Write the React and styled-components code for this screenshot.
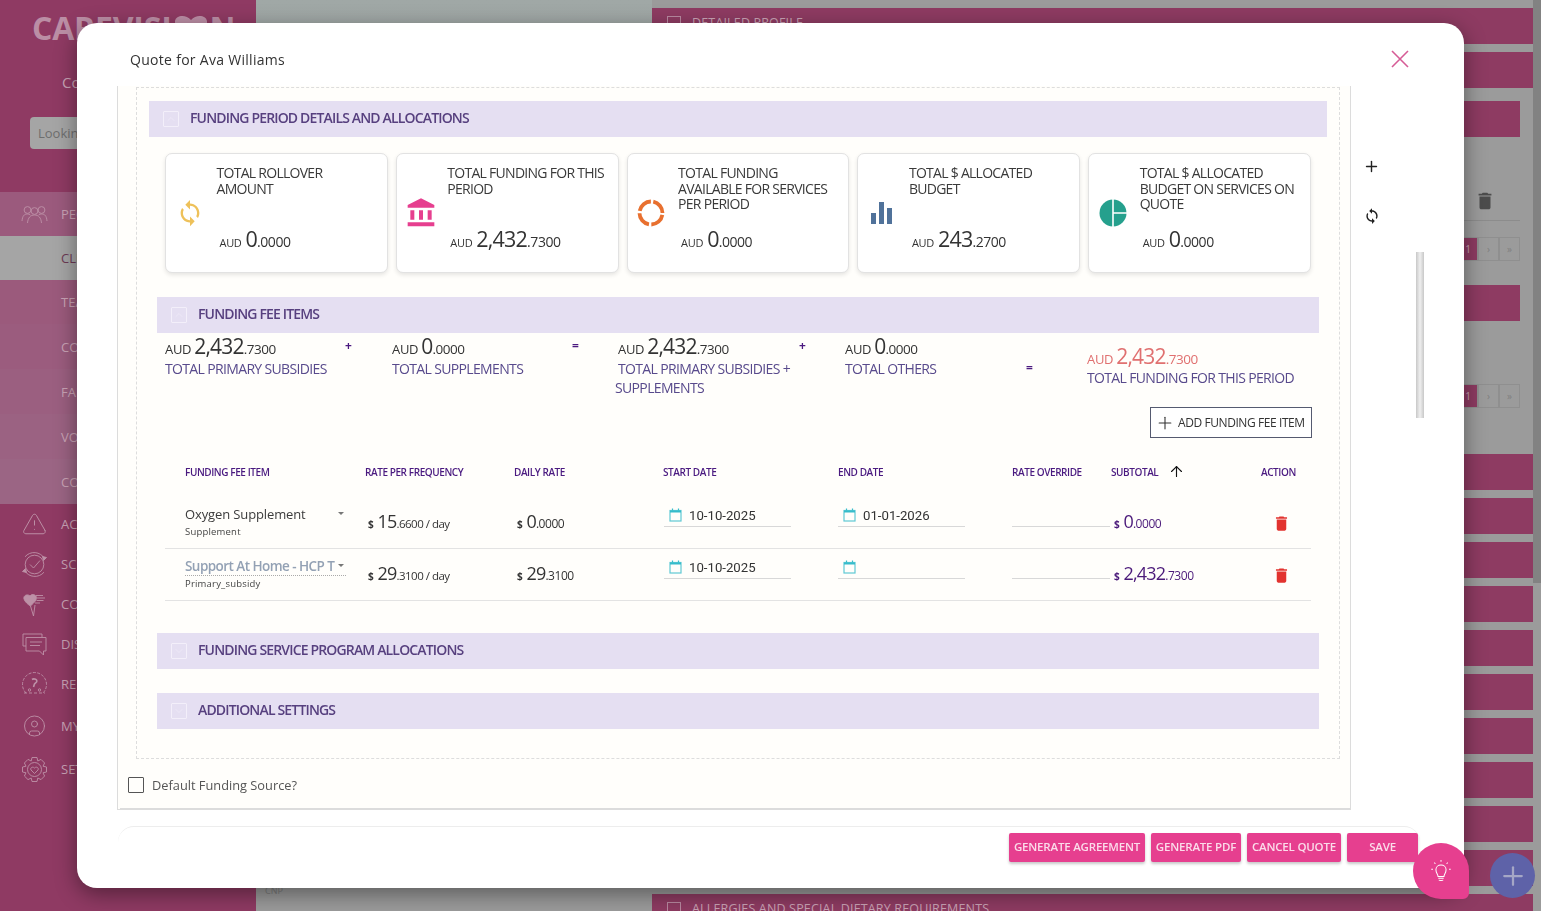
import React from 'react'
import styled, { createGlobalStyle } from 'styled-components'
import { IoMdSync } from 'react-icons/io'
import { MdAccountBalance, MdDelete } from 'react-icons/md'
import { TriangleAlert, CircleUser, Plus, ArrowUp, ChevronUp, ChevronDown } from 'lucide-react'

const GlobalStyle = createGlobalStyle`
    html, body {
        margin: 0;
        height: 100%;
        overflow: hidden;
        font-family: "Open Sans", "Liberation Sans", sans-serif;
        background: #9b9b9b;
    }
    * { box-sizing: border-box; }
`

/* ---------- page behind the dialog ---------- */

const Page = styled.div`
    display: flex;
    height: 911px;
    overflow: hidden;
`

const Sidebar = styled.aside`
    width: 256px;
    flex: none;
    background: #8f3a63;
    color: #c9a3b5;
`

const Logo = styled.div`
    display: flex;
    align-items: center;
    height: 38px;
    margin: 8px 0 0 32px;
    font-size: 32px;
    font-weight: 700;
    letter-spacing: -0.2px;
    color: #bb8ea5;
`

const OrgName = styled.div`
    margin: 26px 0 0 62px;
    font-size: 15px;
    line-height: 20px;
`

const SearchBox = styled.div`
    width: 190px;
    height: 32px;
    margin: 25px 0 0 30px;
    padding-left: 8px;
    background: #a5a5a5;
    border-radius: 4px;
    color: #6e6e6e;
    font-size: 13px;
    line-height: 32px;
`

const NavGroup = styled.div`
    margin-top: ${(p) => p.$top || 0}px;
`

const NavItem = styled.div`
    display: flex;
    align-items: center;
    height: ${(p) => p.$height}px;
    padding-left: ${(p) => p.$indent || 21}px;
    gap: 13px;
    font-size: 13px;
    background: ${(p) => p.$bg || 'transparent'};
    color: ${(p) => p.$color || '#c9a3b5'};

    svg {
        flex: none;
        width: 27px;
        color: #bd91a7;
    }
`

const Middle = styled.div`
    width: 396px;
    flex: none;
    display: flex;
    align-items: flex-end;
    padding: 0 0 14px 9px;
    background: linear-gradient(#a0a8a6, #9b9b9b 30%);
    color: #7a7a7a;
    font-size: 9px;
`

const RightColumn = styled.div`
    width: 881px;
    flex: none;
    padding-top: 8px;
    display: flex;
    flex-direction: column;
`

const Bar = styled.div`
    display: flex;
    align-items: center;
    flex: none;
    height: 36px;
    width: ${(p) => p.$width || 881}px;
    margin-bottom: 8px;
    padding: 0 0 7px 15px;
    gap: 11px;
    background: #8e3b62;
    color: #c9a3b5;
    font-size: 12.5px;
    letter-spacing: 0.16px;
`

const BarBox = styled.span`
    width: 14px;
    height: 14px;
    border: 1px solid #b98aa1;
`

const InnerBlock = styled.div`
    width: 868px;
    height: ${(p) => p.$height}px;
    flex: none;
    display: flex;
    flex-direction: column;
    align-items: flex-end;
    padding-top: ${(p) => p.$top}px;
`

const TrashLine = styled.div`
    width: 100%;
    height: 76px;
    flex: none;
    display: flex;
    justify-content: flex-end;
    align-items: flex-end;
    padding: 0 24px 8px 0;
    border-bottom: 1px solid #8c8c8c;
    color: #4c4c4c;
    font-size: 22px;
`

const Pager = styled.div`
    display: flex;
    height: 24px;
    flex: none;
    margin: ${(p) => p.$margin};
`

const PagerCell = styled.span`
    width: ${(p) => p.$width || 21}px;
    display: flex;
    align-items: center;
    justify-content: center;
    font-size: 10px;
    border: 1px solid #8f8f8f;
    background: ${(p) => (p.$active ? '#8e3b62' : 'transparent')};
    color: ${(p) => (p.$active ? '#c9a3b5' : '#7f7f7f')};
`

const PageScroll = styled.div`
    flex: 1;
    background: linear-gradient(#828282 0, #828282 583px, #9b9b9b 583px);
`

/* ---------- dialog ---------- */

const Overlay = styled.div`
    position: fixed;
    inset: 0;
    padding: 23px 0 0 77px;
`

const Modal = styled.div`
    width: 1387px;
    height: 865px;
    background: #fff;
    border-radius: 20px;
    box-shadow: 0 6px 22px rgba(0, 0, 0, 0.42);
    display: flex;
    flex-direction: column;
`

const ModalHeader = styled.header`
    height: 63px;
    flex: none;
    display: flex;
    align-items: center;
    justify-content: space-between;
    padding: 9px 54px 0 53px;
    color: #333;
    font-size: 14px;
    letter-spacing: 0.29px;
`

const ModalBody = styled.div`
    display: flex;
    height: 724px;
    padding-left: 40px;
    flex: none;
`

const Panel = styled.div`
    width: 1234px;
    background: #fffefb;
    border: 1px solid #dcdcdc;
    border-top: 0;
`

const PanelInner = styled.div`
    height: 722px;
    margin-left: 2px;
    border-bottom: 1px solid #dcdcdc;
`

const DashedBox = styled.div`
    width: 1204px;
    height: 672px;
    margin: 1px 0 0 16px;
    padding: 13px 12px 0;
    border: 1px dashed #ddd;
`

const SectionBar = styled.div`
    display: flex;
    align-items: center;
    height: 36px;
    margin: ${(p) => p.$margin || '0'};
    padding: 0 0 3px 14px;
    gap: 11px;
    background: #e5dff2;
    color: #57407f;
    font-size: 14px;
    font-weight: 600;
    letter-spacing: -0.84px;
`

const Toggle = styled.span`
    display: flex;
    align-items: center;
    justify-content: center;
    width: 16px;
    height: 16px;
    margin-top: 3px;
    border: 1px solid #f3effa;
    border-radius: 1px;
    color: #f3effa;
`

const CardRow = styled.div`
    display: grid;
    grid-template-columns: repeat(5, 1fr);
    gap: 8px;
    margin: 16px 16px 0;
`

const Card = styled.div`
    display: flex;
    height: 120px;
    background: #fff;
    border: 1px solid #e2e2e2;
    border-radius: 7px;
    box-shadow: 0 2px 4px rgba(0, 0, 0, 0.1);
`

const CardIcon = styled.div`
    width: 50.5px;
    flex: none;
    display: flex;
    align-items: center;
    justify-content: center;
    padding: 0 3px 0 0;
`

const CardBody = styled.div`
    flex: 1;
    display: flex;
    flex-direction: column;
    padding: 11px 0 21px 0;
`

const CardTitle = styled.div`
    max-width: 162px;
    color: #3a3a3a;
    font-size: 14px;
    line-height: 15.5px;
    letter-spacing: -0.72px;
`

const CardValue = styled.div`
    margin-top: auto;
    padding-left: 3px;
`

const AmountLine = styled.div`
    display: flex;
    align-items: baseline;
    white-space: nowrap;
    padding-left: ${(p) => p.$indent || 0}px;
    color: ${(p) => p.$color || '#333'};
`

const Currency = styled.span`
    font-size: ${(p) => p.$size || 12.5}px;
    margin-right: ${(p) => p.$gap ?? 4}px;
    font-weight: ${(p) => p.$weight || 400};
    letter-spacing: -0.3px;
`

const Whole = styled.span`
    font-size: ${(p) => p.$size || 21.5}px;
    line-height: 22px;
    font-weight: 500;
    letter-spacing: -0.8px;
`

const Decimals = styled.span`
    font-size: ${(p) => p.$size || 14}px;
    letter-spacing: -0.45px;
`

const FeeSection = styled.section`
    margin: 0 8px;
`

const TotalsRow = styled.div`
    display: grid;
    grid-template-columns: 180px 47px 180px 43px 184px 46px 181px 61px 1fr;
    padding: 2px 0 0 8px;
    height: 74px;
`

const Total = styled.div`
    padding-top: ${(p) => p.$top || 0}px;
`

const TotalLabel = styled.div`
    margin-top: ${(p) => (p.$nowrap ? 0 : 1)}px;
    color: #584a8c;
    font-size: 14px;
    line-height: 19px;
    letter-spacing: -0.65px;
    text-indent: ${(p) => p.$indent || 0}px;
    white-space: ${(p) => (p.$nowrap ? 'nowrap' : 'normal')};
`

const Operator = styled.div`
    padding-top: ${(p) => p.$top || 3}px;
    color: #4b1a80;
    font-size: 12px;
    font-weight: 700;
    line-height: 16px;
`

const ButtonRow = styled.div`
    display: flex;
    justify-content: flex-end;
    padding-right: 7px;
`

const AddButton = styled.button`
    display: flex;
    align-items: center;
    gap: 3px;
    width: 162px;
    height: 31px;
    padding: 0 0 0 4px;
    background: #fff;
    border: 1px solid #555a70;
    color: #333;
    font-family: inherit;
    font-size: 12px;
    letter-spacing: -0.42px;
    white-space: nowrap;
`

const FeeTable = styled.div`
    margin: 0 8px;
`

const Columns = styled.div`
    display: grid;
    grid-template-columns: 180px 149px 149px 175px 174px 99px 150px 1fr;
    padding-left: 20px;
`

const HeadRow = styled(Columns)`
    height: 59px;
    padding-top: 8px;
    align-items: center;
    font-size: 10px;
    letter-spacing: -0.42px;
    font-weight: 600;
`

const HeadCell = styled.div`
    display: flex;
    align-items: center;
    gap: 10px;
    color: #4a1a80;
`

const BodyRow = styled(Columns)`
    height: 52px;
    border-bottom: 1px solid #e3e3e3;
`

const ItemCell = styled.div`
    padding-top: 7px;
`

const ItemSelect = styled.div`
    position: relative;
    width: 161px;
    height: 20px;
    font-size: ${(p) => (p.$muted ? 13.5 : 13)}px;
    line-height: 20px;
    overflow: hidden;
    white-space: nowrap;
    color: ${(p) => (p.$muted ? '#93a1b4' : '#3b3b3b')};
    font-weight: ${(p) => (p.$muted ? 600 : 400)};
    letter-spacing: ${(p) => (p.$muted ? '-0.55px' : '-0.12px')};
    border-bottom: ${(p) => (p.$muted ? '1px dotted #aaa' : '0')};

    &::after {
        content: '';
        position: absolute;
        right: 2px;
        top: 8px;
        border: 3px solid transparent;
        border-top: 3px solid #777;
    }
`

const ItemType = styled.div`
    margin-top: 1px;
    color: #444;
    font-size: 9.5px;
    line-height: 13px;
    letter-spacing: 0.2px;
`

const AmountCell = styled.div`
    padding-top: 13px;
    padding-left: 3px;
`

const RateDecimals = styled.span`
    font-size: 11.5px;
    letter-spacing: -0.5px;
`

const DateCell = styled.div`
    display: flex;
    align-items: center;
    gap: 7px;
    width: 127px;
    height: 23px;
    margin: 7px 0 0 ${(p) => p.$indent || 0}px;
    padding-left: 5px;
    border-bottom: 1px solid #d8d8d8;
    color: #333;
    font-family: Roboto, "Liberation Sans", sans-serif;
    font-size: 13.2px;
`

const OverrideCell = styled.div`
    width: 98px;
    height: 30px;
    border-bottom: 1px solid #d8d8d8;
`

const ActionCell = styled.div`
    padding: 16px 0 0 11px;
    color: #e2332f;
    font-size: 19px;
`

const DefaultRow = styled.label`
    display: flex;
    align-items: center;
    gap: 8px;
    margin: 17px 0 0 8px;
    color: #555;
    font-size: 12.8px;
`

const Checkbox = styled.span`
    width: 16px;
    height: 16px;
    border: 1px solid #555;
    border-radius: 1px;
`

const SideActions = styled.div`
    width: 43px;
    flex: none;
    padding: 72px 0 0 12px;
    display: flex;
    flex-direction: column;
    gap: 32px;
    color: #222;
`

const ScrollThumb = styled.div`
    width: 8px;
    height: 166px;
    margin: 166px 0 0 22px;
    background: linear-gradient(90deg, #c8c8c8, #efefef 50%, #c8c8c8);
`

const Footer = styled.footer`
    display: flex;
    justify-content: flex-end;
    gap: 6px;
    width: 1302px;
    height: 40px;
    margin: 16px 0 0 41px;
    padding: 6px 2px 0 0;
    border-top: 1px solid #ededed;
    border-radius: 16px 16px 0 0;
`

const ActionButton = styled.button`
    width: ${(p) => p.$width}px;
    height: 29px;
    padding: 0 0 2px;
    border: 0;
    border-radius: 2px;
    background: #e63f8f;
    box-shadow: 0 2px 3px rgba(0, 0, 0, 0.22);
    color: #fbdcea;
    font-family: inherit;
    font-size: 11.5px;
    font-weight: 600;
    letter-spacing: -0.2px;
    white-space: nowrap;
`

const HelpFab = styled.div`
    position: fixed;
    left: 1413px;
    top: 843px;
    width: 56px;
    height: 56px;
    display: flex;
    align-items: center;
    justify-content: center;
    background: #e63f8f;
    border-radius: 50% 50% 6px 50%;
    color: #fff;
`

const AddFab = styled.div`
    position: fixed;
    left: 1490px;
    top: 853px;
    width: 45px;
    height: 45px;
    display: flex;
    align-items: center;
    justify-content: center;
    background: #5e62a8;
    border-radius: 50%;
    color: #a5a7c6;
`

/* ---------- drawn icons ---------- */

const DonutIcon = () => (
    <svg width="28" height="28" viewBox="0 0 28 28">
        <circle cx="14" cy="14" r="11.5" fill="none" stroke="#e8702f" strokeWidth="3.8" strokeDasharray="15.6 2.46" strokeDashoffset="-2" />
    </svg>
)

const BarsIcon = () => (
    <svg width="24" height="24" viewBox="0 0 24 24" fill="#50729a">
        <rect x="1" y="12" width="5" height="11" />
        <rect x="9" y="1" width="5" height="22" />
        <rect x="17" y="7" width="5" height="16" />
    </svg>
)

const PieIcon = () => (
    <svg width="28" height="28" viewBox="0 0 28 28">
        <circle cx="14" cy="14" r="13.5" fill="#25a08d" />
        <path d="M14 0V28M14 14H28" stroke="#fff" strokeWidth="1.6" />
    </svg>
)

const CalendarIcon = () => (
    <svg width="13" height="14" viewBox="0 0 13 14" fill="none">
        <rect x="1" y="2.5" width="11" height="10.5" stroke="#5fc9d4" strokeWidth="1.2" />
        <path d="M1 3.5H12" stroke="#36bccb" strokeWidth="2" />
        <path d="M3.5 0.5V2.5M9.5 0.5V2.5" stroke="#36bccb" strokeWidth="1.2" />
    </svg>
)

const CloseIcon = () => (
    <svg width="20" height="20" viewBox="0 0 20 20" stroke="#d65c96" strokeWidth="1.6">
        <path d="M2 2L18 18M18 2L2 18" />
    </svg>
)

const BulbIcon = () => (
    <svg width="22" height="24" viewBox="0 0 26 28" fill="none" stroke="currentColor" strokeWidth="1.2">
        <path d="M9.5 20.5C9.5 17.5 7 16.5 7 12.5C7 9.2 9.7 7 13 7C16.3 7 19 9.2 19 12.5C19 16.5 16.5 17.5 16.5 20.5Z" />
        <path d="M9.8 22.5H16.2M10.5 24.5C11 25.6 15 25.6 15.5 24.5" />
        <path d="M13 1V3.5M5 4L6.6 5.6M21 4L19.4 5.6M1.5 12H3.5M22.5 12H24.5" strokeDasharray="2 1" />
    </svg>
)

const PeopleIcon = () => (
    <svg width="27" height="24" viewBox="0 0 27 24" fill="none" stroke="currentColor" strokeWidth="0.9">
        <circle cx="6.5" cy="8" r="3.4" />
        <circle cx="13.5" cy="9" r="3.4" />
        <circle cx="20.5" cy="8" r="3.4" />
        <path d="M1 19C1.5 14 3 12 6.5 12C7.5 12 8.5 12.2 9.3 12.8M6.5 21C7 15.5 9.5 13 13.5 13C17.5 13 20 15.5 20.5 21M17.7 12.8C18.5 12.2 19.5 12 20.5 12C24 12 25.5 14 26 19" />
    </svg>
)

const ScheduleIcon = () => (
    <svg width="27" height="27" viewBox="0 0 27 27" fill="none" stroke="currentColor" strokeWidth="0.9">
        <path d="M23.5 7.5A12 12 0 0 0 4 5.8M3.5 19.5A12 12 0 0 0 23 21.2" />
        <circle cx="13.5" cy="13.5" r="9.3" />
        <path d="M9 13.5L12.5 17L19 9.5" />
        <path d="M1.5 20.5L4.5 17.5L5.5 21.5ZM25.5 6.5L22.5 9.5L21.5 5.5Z" fill="currentColor" />
    </svg>
)

const CoreIcon = () => (
    <svg width="27" height="27" viewBox="0 0 27 27" fill="none" stroke="currentColor" strokeWidth="0.9">
        <path d="M3 8C2 4.5 6.5 2.5 9 5C11 2.5 15 3.5 15.5 6.5C15.5 10 11.5 13 9.5 15C7 13.5 4 11 3 8Z" fill="currentColor" />
        <path d="M15 4.5H22M16 7H24M15.5 9.5H22.5M14 12H19M9.5 15L12.5 25L14 14" />
    </svg>
)

const ChatIcon = () => (
    <svg width="27" height="26" viewBox="0 0 27 26" fill="none" stroke="currentColor" strokeWidth="0.9">
        <path d="M5 15H2V3H21V6" />
        <path d="M5 6.5H25V20H22.5V24L18.5 20H5Z" />
        <path d="M9 11H21M9 14.5H19" />
    </svg>
)

const DialIcon = () => (
    <svg width="27" height="26" viewBox="0 0 27 26" fill="none" stroke="currentColor" strokeWidth="0.9">
        <path d="M5 22A12 12 0 1 1 22 22" strokeDasharray="3 1.4" />
        <path d="M3 22H24" strokeDasharray="3 2" />
        <path d="M11 8.5C13 7 17 8.5 15.5 11L13.5 13L12.5 16" strokeWidth="1.6" />
        <circle cx="8.5" cy="19" r="1.2" />
        <circle cx="18.5" cy="19" r="1.2" />
    </svg>
)

const GearIcon = () => (
    <svg width="27" height="27" viewBox="0 0 27 27" fill="none" stroke="currentColor" strokeWidth="0.9">
        <path d="M11 1.5H16L16.8 5L20 3.4L23.6 7L22 10.2L25.5 11V16L22 16.8L23.6 20L20 23.6L16.8 22L16 25.5H11L10.2 22L7 23.6L3.4 20L5 16.8L1.5 16V11L5 10.2L3.4 7L7 3.4L10.2 5Z" strokeLinejoin="round" />
        <circle cx="13.5" cy="13.5" r="7" />
        <path d="M13.5 17.5L10 14C8.8 12 11.6 10 13.5 12C15.4 10 18.2 12 17 14Z" />
    </svg>
)

const LogoHeart = () => (
    <svg width="38" height="26" viewBox="0 0 38 26" fill="currentColor">
        <path d="M19 24C9 18 2 13 3 7C4 1 14 0 19 6C24 0 34 1 35 7C36 13 29 18 19 24Z" />
    </svg>
)

const Amount = ({ whole, decimals, currency = 'AUD', size, decSize, curSize, gap, color, indent, weight }) => (
    <AmountLine $indent={indent} $color={color}>
        <Currency $size={curSize} $gap={gap} $weight={weight}>{currency}</Currency>
        <Whole $size={size}>{whole}</Whole>
        <Decimals $size={decSize}>{decimals}</Decimals>
    </AmountLine>
)

const cards = [
    { title: 'TOTAL ROLLOVER AMOUNT', whole: '0', decimals: '.0000', icon: <IoMdSync size={30} color="#eec15a" /> },
    { title: 'TOTAL FUNDING FOR THIS PERIOD', whole: '2,432', decimals: '.7300', icon: <MdAccountBalance size={32} color="#e63f8f" /> },
    { title: 'TOTAL FUNDING AVAILABLE FOR SERVICES PER PERIOD', whole: '0', decimals: '.0000', icon: <DonutIcon /> },
    { title: 'TOTAL $ ALLOCATED BUDGET', whole: '243', decimals: '.2700', icon: <BarsIcon /> },
    { title: 'TOTAL $ ALLOCATED BUDGET ON SERVICES ON QUOTE', whole: '0', decimals: '.0000', icon: <PieIcon /> },
]

const sideTop = [
    { label: 'PEOPLE', bg: '#9b5a7d', height: 44, icon: <PeopleIcon /> },
    { label: 'CLIENTS', bg: '#a5a5a5', color: '#6d3a55', height: 44, indent: 61 },
    { label: 'TEAM', bg: '#9b5a7c', height: 44, indent: 61 },
    { label: 'CONTACTS', bg: '#9b5c7e', height: 45, indent: 61 },
    { label: 'FAMILY', bg: '#9b5f80', height: 45, indent: 61 },
    { label: 'VOLUNTEERS', bg: '#9b6282', height: 45, indent: 61 },
    { label: 'COORDINATORS', bg: '#9b6584', height: 45, indent: 61 },
]

const sideBottom = [
    { label: 'ACTIONS', height: 40, icon: <TriangleAlert size={26} strokeWidth={0.9} /> },
    { label: 'SCHEDULE', height: 40, icon: <ScheduleIcon /> },
    { label: 'CORE', height: 40, icon: <CoreIcon /> },
    { label: 'DISCUSSIONS', height: 40, icon: <ChatIcon /> },
    { label: 'REPORTS', height: 40, icon: <DialIcon /> },
    { label: 'MY', height: 44, icon: <CircleUser size={24} strokeWidth={0.9} /> },
    { label: 'SETTINGS', height: 42, icon: <GearIcon /> },
]

const feeItems = [
    { name: 'Oxygen Supplement', type: 'Supplement', rate: ['15', '.6600'], daily: ['0', '.0000'], start: '10-10-2025', end: '01-01-2026', sub: ['0', '.0000'] },
    { name: 'Support At Home - HCP T', type: 'Primary_subsidy', muted: true, rate: ['29', '.3100'], daily: ['29', '.3100'], start: '10-10-2025', end: '', sub: ['2,432', '.7300'] },
]

const totalSizes = { gap: 3, curSize: 13, size: 21, decSize: 13.5 }

const Paging = ({ margin }) => (
    <Pager $margin={margin}>
        <PagerCell $active $width={20}>1</PagerCell>
        <PagerCell>›</PagerCell>
        <PagerCell>»</PagerCell>
    </Pager>
)

function BackgroundPage() {
    return (
        <Page>
            <Sidebar>
                <Logo>CAREVISI<LogoHeart />N</Logo>
                <OrgName>Community</OrgName>
                <SearchBox>Looking for...</SearchBox>
                <NavGroup $top={43}>
                    {sideTop.map((item) => (
                        <NavItem key={item.label} $height={item.height} $bg={item.bg} $color={item.color} $indent={item.indent}>
                            {item.icon}
                            {item.label}
                        </NavItem>
                    ))}
                </NavGroup>
                <NavGroup>
                    {sideBottom.map((item) => (
                        <NavItem key={item.label} $height={item.height}>
                            {item.icon}
                            {item.label}
                        </NavItem>
                    ))}
                </NavGroup>
            </Sidebar>
            <Middle>CNP</Middle>
            <RightColumn>
                <Bar><BarBox />DETAILED PROFILE</Bar>
                <Bar />
                <InnerBlock $height={358} $top={5}>
                    <Bar $width={868} />
                    <TrashLine><MdDelete /></TrashLine>
                    <Paging margin="16px 0 24px" />
                    <Bar $width={868} />
                    <Paging margin="55px 0 0" />
                </InnerBlock>
                {Array.from({ length: 10 }, (_, i) => <Bar key={i} />)}
                <Bar><BarBox />ALLERGIES AND SPECIAL DIETARY REQUIREMENTS</Bar>
            </RightColumn>
            <PageScroll />
        </Page>
    )
}

function FeeRow({ item }) {
    const money = { currency: '$', curSize: 10, gap: 4, size: 18, decSize: 12, weight: 700 }
    return (
        <BodyRow>
            <ItemCell>
                <ItemSelect $muted={item.muted}>{item.name}</ItemSelect>
                <ItemType>{item.type}</ItemType>
            </ItemCell>
            <AmountCell>
                <AmountLine $color="#333">
                    <Currency $size={10} $weight={700}>$</Currency>
                    <Whole $size={18}>{item.rate[0]}</Whole>
                    <RateDecimals>{item.rate[1]} / day</RateDecimals>
                </AmountLine>
            </AmountCell>
            <AmountCell><Amount {...money} whole={item.daily[0]} decimals={item.daily[1]} /></AmountCell>
            <DateCell $indent={1}><CalendarIcon />{item.start}</DateCell>
            <DateCell><CalendarIcon />{item.end}</DateCell>
            <OverrideCell />
            <AmountCell><Amount {...money} color="#4b1a7a" whole={item.sub[0]} decimals={item.sub[1]} /></AmountCell>
            <ActionCell><MdDelete /></ActionCell>
        </BodyRow>
    )
}

export default function App() {
    return (
        <>
            <GlobalStyle />
            <BackgroundPage />
            <Overlay>
                <Modal>
                    <ModalHeader>
                        <span>Quote for Ava Williams</span>
                        <CloseIcon />
                    </ModalHeader>
                    <ModalBody>
                        <Panel>
                            <PanelInner>
                                <DashedBox>
                                    <SectionBar>
                                        <Toggle><ChevronUp size={12} strokeWidth={1} /></Toggle>
                                        FUNDING PERIOD DETAILS AND ALLOCATIONS
                                    </SectionBar>
                                    <CardRow>
                                        {cards.map((card) => (
                                            <Card key={card.title}>
                                                <CardIcon>{card.icon}</CardIcon>
                                                <CardBody>
                                                    <CardTitle>{card.title}</CardTitle>
                                                    <CardValue>
                                                        <Amount curSize={11} whole={card.whole} decimals={card.decimals} />
                                                    </CardValue>
                                                </CardBody>
                                            </Card>
                                        ))}
                                    </CardRow>
                                    <FeeSection>
                                        <SectionBar $margin="24px 0 0">
                                            <Toggle><ChevronUp size={12} strokeWidth={1} /></Toggle>
                                            FUNDING FEE ITEMS
                                        </SectionBar>
                                        <TotalsRow>
                                            <Total>
                                                <Amount {...totalSizes} whole="2,432" decimals=".7300" />
                                                <TotalLabel>TOTAL PRIMARY SUBSIDIES</TotalLabel>
                                            </Total>
                                            <Operator>+</Operator>
                                            <Total>
                                                <Amount {...totalSizes} whole="0" decimals=".0000" />
                                                <TotalLabel>TOTAL SUPPLEMENTS</TotalLabel>
                                            </Total>
                                            <Operator>=</Operator>
                                            <Total>
                                                <Amount {...totalSizes} indent={3} whole="2,432" decimals=".7300" />
                                                <TotalLabel $indent={3}>TOTAL PRIMARY SUBSIDIES + SUPPLEMENTS</TotalLabel>
                                            </Total>
                                            <Operator>+</Operator>
                                            <Total>
                                                <Amount {...totalSizes} whole="0" decimals=".0000" />
                                                <TotalLabel>TOTAL OTHERS</TotalLabel>
                                            </Total>
                                            <Operator $top={25}>=</Operator>
                                            <Total $top={10}>
                                                <Amount {...totalSizes} color="#e07070" whole="2,432" decimals=".7300" />
                                                <TotalLabel $nowrap>TOTAL FUNDING FOR THIS PERIOD</TotalLabel>
                                            </Total>
                                        </TotalsRow>
                                        <ButtonRow>
                                            <AddButton><Plus size={20} strokeWidth={1.3} />ADD FUNDING FEE ITEM</AddButton>
                                        </ButtonRow>
                                        <FeeTable>
                                            <HeadRow>
                                                <HeadCell>FUNDING FEE ITEM</HeadCell>
                                                <HeadCell>RATE PER FREQUENCY</HeadCell>
                                                <HeadCell>DAILY RATE</HeadCell>
                                                <HeadCell>START DATE</HeadCell>
                                                <HeadCell>END DATE</HeadCell>
                                                <HeadCell>RATE OVERRIDE</HeadCell>
                                                <HeadCell>SUBTOTAL <ArrowUp size={17} color="#111" strokeWidth={1.6} /></HeadCell>
                                                <HeadCell>ACTION</HeadCell>
                                            </HeadRow>
                                            {feeItems.map((item) => <FeeRow key={item.type} item={item} />)}
                                        </FeeTable>
                                        <SectionBar $margin="32px 0 0">
                                            <Toggle><ChevronDown size={12} strokeWidth={1} /></Toggle>
                                            FUNDING SERVICE PROGRAM ALLOCATIONS
                                        </SectionBar>
                                        <SectionBar $margin="24px 0 0">
                                            <Toggle><ChevronDown size={12} strokeWidth={1} /></Toggle>
                                            ADDITIONAL SETTINGS
                                        </SectionBar>
                                    </FeeSection>
                                </DashedBox>
                                <DefaultRow>
                                    <Checkbox />
                                    Default Funding Source?
                                </DefaultRow>
                            </PanelInner>
                        </Panel>
                        <SideActions>
                            <Plus size={17} strokeWidth={2} />
                            <IoMdSync size={18} />
                        </SideActions>
                        <ScrollThumb />
                    </ModalBody>
                    <Footer>
                        <ActionButton $width={136}>GENERATE AGREEMENT</ActionButton>
                        <ActionButton $width={90}>GENERATE PDF</ActionButton>
                        <ActionButton $width={94}>CANCEL QUOTE</ActionButton>
                        <ActionButton $width={71}>SAVE</ActionButton>
                    </Footer>
                </Modal>
            </Overlay>
            <HelpFab><BulbIcon /></HelpFab>
            <AddFab><Plus size={30} strokeWidth={1.8} /></AddFab>
        </>
    )
}
